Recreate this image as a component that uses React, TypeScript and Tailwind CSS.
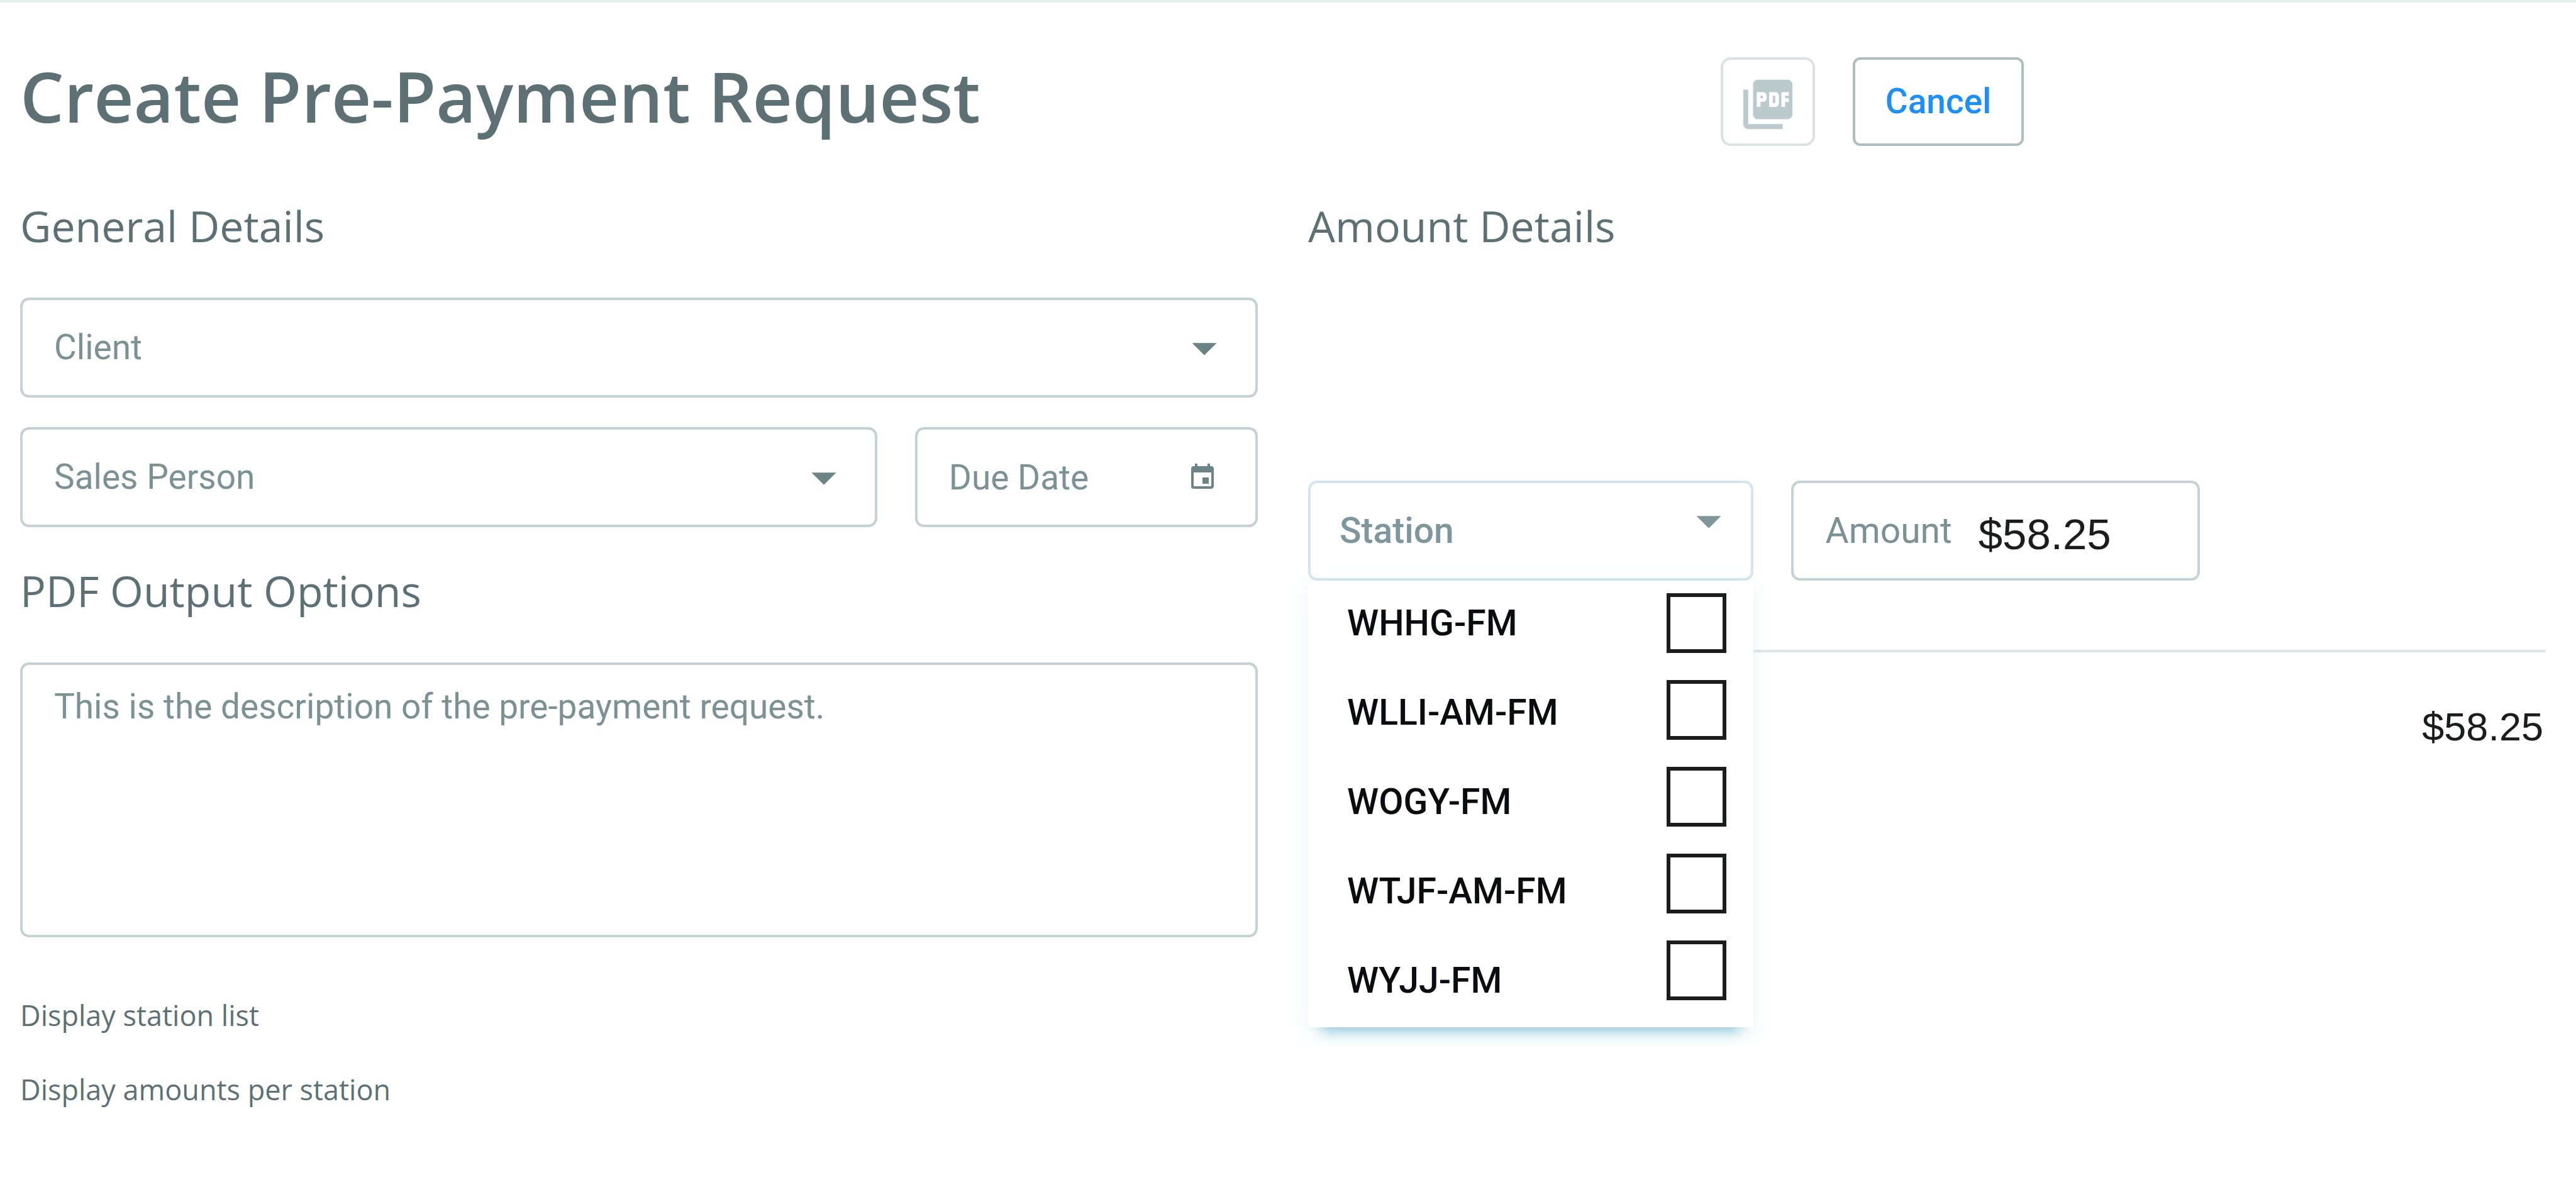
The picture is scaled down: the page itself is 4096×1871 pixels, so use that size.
import { useState } from "react";
import type { ReactNode } from "react";
import { MdArrowDropDown, MdEvent, MdPictureAsPdf } from "react-icons/md";

const STATIONS = ["WHHG-FM", "WLLI-AM-FM", "WOGY-FM", "WTJF-AM-FM", "WYJJ-FM"];

const fieldBox =
  "h-[159px] w-full rounded-[14px] border-4 border-[#c5d1d3] bg-white font-[Roboto,sans-serif] text-[55px] text-[#7b9194]";

function SectionTitle({ children }: { children: ReactNode }) {
  return (
    <h2 className="text-[68px] leading-[96px] text-[#5d7074]">{children}</h2>
  );
}

function SelectField({ label }: { label: string }) {
  return (
    <div className="relative">
      <select
        aria-label={label}
        className={`${fieldBox} block appearance-none pl-[50px] pr-36`}
      >
        <option>{label}</option>
      </select>
      <MdArrowDropDown className="pointer-events-none absolute inset-y-0 right-[38px] my-auto size-[94px] text-[#6d8487]" />
    </div>
  );
}

function StationPicker() {
  const [open, setOpen] = useState(true);
  const [selected, setSelected] = useState<string[]>([]);

  function toggle(station: string) {
    setSelected((prev) =>
      prev.includes(station)
        ? prev.filter((s) => s !== station)
        : [...prev, station],
    );
  }

  return (
    <div className="relative w-[36%]">
      <button
        type="button"
        aria-expanded={open}
        onClick={() => setOpen(!open)}
        className="flex h-[159px] w-full items-center justify-between rounded-[14px] border-4 border-[#d4e6ec] bg-white pl-[46px] pr-5 font-[Roboto,sans-serif] text-[57px] font-medium text-[#7f979c]"
      >
        Station
        <MdArrowDropDown className="mb-8 size-[94px]" />
      </button>

      {open && (
        <div className="absolute inset-x-0 top-full z-10 flex justify-between bg-white pb-2 pl-[62px] pr-[43px] shadow-[0_28px_20px_-22px_#8fc8dc,0_8px_28px_rgba(140,200,222,0.2)]">
          <div className="flex flex-col gap-[10px] pt-0.5">
            {STATIONS.map((station) => (
              <label
                key={station}
                htmlFor={station}
                className="font-[Roboto,sans-serif] text-[57px] leading-[132px] font-medium text-[#0b0c10]"
              >
                {station}
              </label>
            ))}
          </div>
          <div className="flex flex-col gap-[43px] pt-5">
            {STATIONS.map((station) => (
              <input
                key={station}
                id={station}
                type="checkbox"
                checked={selected.includes(station)}
                onChange={() => toggle(station)}
                className="size-[95px] appearance-none border-[6px] border-[#1b1c1e] bg-white checked:bg-[#1b1c1e]"
              />
            ))}
          </div>
        </div>
      )}
    </div>
  );
}

export default function App() {
  const [amount, setAmount] = useState("$58.25");

  return (
    <div className="min-h-screen w-full border-t-4 border-[#e7ecec] bg-white font-['Open_Sans',sans-serif] text-[#5d7074]">
      {/* Header */}
      <header className="grid grid-cols-2 gap-20 pl-8 pr-12">
        <h1 className="pt-[72px] text-[110px] leading-[152px] font-semibold whitespace-nowrap">
          Create Pre-Payment Request
        </h1>
        <div className="ml-[calc(100%/3)] flex gap-[60px] pt-[87px]">
          <button
            type="button"
            disabled
            aria-label="Export PDF"
            className="flex h-[141px] w-[150px] items-center justify-center rounded-[16px] border-4 border-[#dae2e4] pt-2 text-[#bacacd]"
          >
            <MdPictureAsPdf className="size-[94px]" />
          </button>
          <button
            type="button"
            className="h-[141px] w-[272px] rounded-[12px] border-4 border-[#adbec1] font-[Roboto,sans-serif] text-[55px] font-medium text-[#1e8ff8]"
          >
            Cancel
          </button>
        </div>
      </header>

      <main className="grid grid-cols-2 gap-20 pt-[79px] pb-12 pl-8 pr-12">
        {/* General details */}
        <div>
          <section>
            <SectionTitle>General Details</SectionTitle>
            <div className="mt-[66px] flex flex-col gap-[47px]">
              <SelectField label="Client" />
              <div className="grid grid-cols-[5fr_2fr] gap-[60px]">
                <SelectField label="Sales Person" />
                <div className="relative">
                  <input
                    type="text"
                    aria-label="Due Date"
                    placeholder="Due Date"
                    className={`${fieldBox} block pl-[50px] pr-28 placeholder:text-[#7b9194]`}
                  />
                  <button
                    type="button"
                    aria-label="Pick a date"
                    className="absolute inset-y-0 right-16 my-auto size-12 text-[#6d8487]"
                  >
                    <MdEvent className="size-12" />
                  </button>
                </div>
              </div>
            </div>
          </section>

          <section className="mt-[53px]">
            <SectionTitle>PDF Output Options</SectionTitle>
            <textarea
              aria-label="Description"
              defaultValue="This is the description of the pre-payment request."
              className="mt-[66px] block h-[437px] w-full resize-none rounded-[14px] border-4 border-[#c5d1d3] px-[50px] py-8 font-[Roboto,sans-serif] text-[55px] leading-[68px] text-[#7b9194]"
            />
            <div className="mt-[92px] flex flex-col gap-[54px] text-[45px] leading-[64px]">
              <p>Display station list</p>
              <p>Display amounts per station</p>
            </div>
          </section>
        </div>

        {/* Amount details */}
        <section>
          <SectionTitle>Amount Details</SectionTitle>
          <div className="mt-[357px] flex gap-[60px]">
            <StationPicker />
            <div className="flex h-[159px] w-[33%] items-center gap-[42px] rounded-[14px] border-4 border-[#c5d1d3] pl-[50px] font-[Roboto,sans-serif] text-[57px] text-[#7b9194]">
              <label htmlFor="amount">Amount</label>
              <input
                id="amount"
                type="text"
                value={amount}
                onChange={(e) => setAmount(e.target.value)}
                className="min-w-0 flex-1 pt-3 font-['Liberation_Sans',sans-serif] text-[69px] text-[#1b1c1e]"
              />
            </div>
          </div>
          <hr className="mt-[110px] border-t-4 border-[#dfe6e9]" />
          <p className="mt-20 pr-1 text-right font-['Liberation_Sans',sans-serif] text-[63px] leading-[76px] text-[#1b1c1e]">
            {amount}
          </p>
        </section>
      </main>
    </div>
  );
}
